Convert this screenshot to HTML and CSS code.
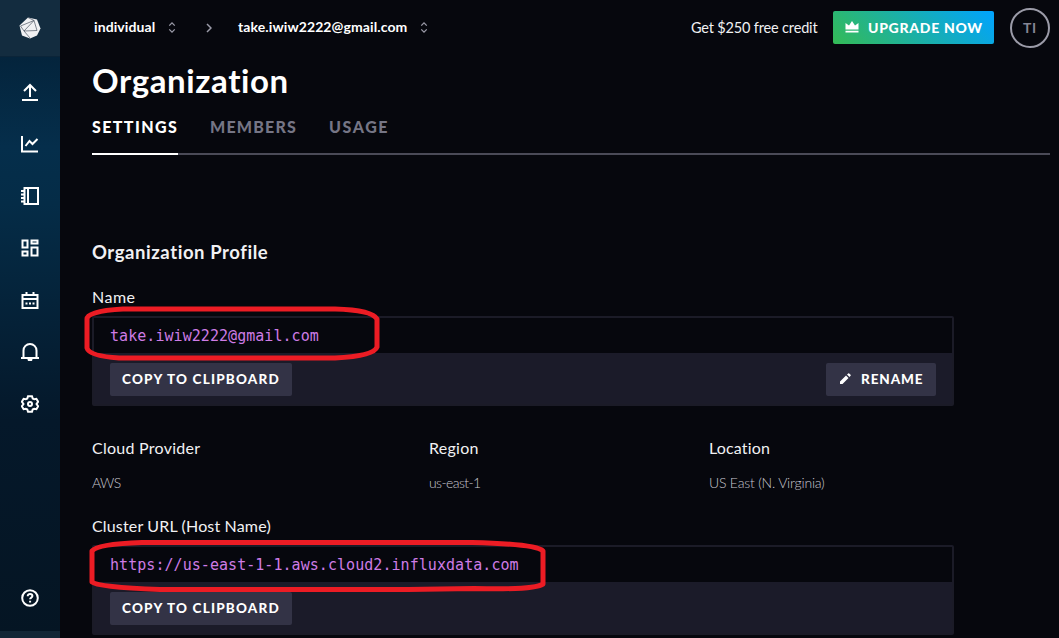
FILE: index.html
```
<!DOCTYPE html>
<html lang="en">
<head>
<meta charset="utf-8">
<title>Organization</title>
<link rel="stylesheet" href="styles.css">
</head>
<body>
<nav class="sidebar">
  <div class="logo">
    <svg width="22" height="22" viewBox="0 0 22 22"><path d="M9 .5 18 2.500l3.500 9-3.500 7-7 3-8-3L.5 8.500z" fill="#f1f1f3"/><path d="M1.500 9 15 3.500 18 13.500 5 14zM9 .5l6 3M5 14l6 7M5 14l10-10.500" fill="none" stroke="#4c5561" stroke-width=".7"/></svg>
  </div>
  <div class="nav-items">
    <svg class="icon" viewBox="0 0 18 18"><path d="M1 17h16M9 14V2M3 8l6-6 6 6"/></svg>
    <svg class="icon" viewBox="0 0 18 18"><path d="M1 1v15.500h16M4.500 11l4-5 3 3 5-5"/></svg>
    <svg class="icon" viewBox="0 0 18 18"><path d="M3.500 1H17v16H3.500zM7 1v16M0 4h3M0 7.500h3M0 11h3M0 14.500h3"/></svg>
    <svg class="icon" viewBox="0 0 18 18"><path d="M1.500 1.500h5v7h-5zM10.500 1.500h6v3h-6zM10.500 8.500h6v8h-6zM1.500 12.500h5v4h-5z"/></svg>
    <svg class="icon calendar" viewBox="0 0 18 18"><path d="M1.500 3h15v13h-15zM1.500 7h15M5.500 0v4M12.500 0v4"/><path class="thin" d="M4.500 11.500h2M8 11.500h2M11.500 11.500h2"/></svg>
    <svg class="icon" viewBox="0 0 18 18"><path d="M2.500 15V7.500a6.500 6.500 0 0 1 13 0V15M0 15h18"/><path class="solid" d="M6.500 16h5a2.500 2.500 0 0 1-5 0z"/></svg>
    <svg class="icon" viewBox="0 0 18 18"><path d="M7 1.300h4l.7 2.200 1.500.8 2.200-.5 1.700 2.900L15.500 9l1.600 2.300-1.700 2.900-2.200-.5-1.500.8-.7 2.200H7l-.7-2.200-1.500-.8-2.200.5-1.700-2.900L2.500 9 .9 6.700l1.700-2.900 2.200.5 1.500-.8z"/><circle cx="9" cy="9" r="2"/></svg>
  </div>
  <svg class="icon help" viewBox="0 0 18 18"><circle cx="9" cy="9" r="7.800"/><path d="M6.700 7.200c0-3 4.700-2.700 4.700-.1 0 1.700-2.300 1.400-2.300 3.200M9.100 11.800v1.700"/></svg>
  <div class="sidebar-foot"></div>
</nav>
<main class="main">
  <header class="header">
    <span class="crumb crumb-account">individual</span>
    <svg class="sort" viewBox="0 0 8 12"><path d="M1 4l3-3 3 3M1 8l3 3 3-3"/></svg>
    <svg class="chevron" viewBox="0 0 6 10"><path d="M1 1l4 4-4 4"/></svg>
    <span class="crumb crumb-org">take.iwiw2222@gmail.com</span>
    <svg class="sort" viewBox="0 0 8 12"><path d="M1 4l3-3 3 3M1 8l3 3 3-3"/></svg>
    <span class="credit">Get $250 free credit</span>
    <button class="upgrade"><svg width="14" height="12" viewBox="0 0 14 12"><path d="M.5 2 4 4.500 7 0l3 4.500L13.500 2v6.500H.5zM.5 9.700h13v1.800H.5z" fill="#fff"/></svg><span>UPGRADE NOW</span></button>
    <div class="avatar">TI</div>
  </header>
  <h1 class="title">Organization</h1>
  <div class="tabs"><span class="tab active">SETTINGS</span><span class="tab members">MEMBERS</span><span class="tab usage">USAGE</span></div>
  <section class="content">
    <h2 class="subtitle">Organization Profile</h2>
    <div class="label name">Name</div>
    <div class="snippet">
      <div class="code">take.iwiw2222@gmail.com</div>
      <div class="snippet-foot"><button class="btn copy">COPY TO CLIPBOARD</button><button class="btn rename"><svg width="12" height="12" viewBox="0 0 12 12"><path d="M1 8.500 7 2.500 9.500 5l-6 6H1zM8 1.500 9.200.4a.8.8 0 0 1 1 0l1.400 1.400a.8.8 0 0 1 0 1L10.500 4z" fill="#fff"/></svg><span>RENAME</span></button></div>
      <svg class="mark mark-name" width="298" height="58" viewBox="0 0 298 58"><path d="M4 14Q4 6 40 4H252Q289 5 294 14V42Q291 51 252 53H36Q6 51 4 43Z"/></svg>
    </div>
    <div class="facts">
      <div><div class="label provider">Cloud Provider</div><div class="value aws">AWS</div></div>
      <div><div class="label region">Region</div><div class="value zone">us-east-1</div></div>
      <div><div class="label location">Location</div><div class="value place">US East (N. Virginia)</div></div>
    </div>
    <div class="label cluster">Cluster URL (Host Name)</div>
    <div class="snippet">
      <div class="code">https://us-east-1-1.aws.cloud2.influxdata.com</div>
      <div class="snippet-foot"><button class="btn copy">COPY TO CLIPBOARD</button></div>
      <svg class="mark mark-url" width="460" height="56" viewBox="0 0 460 56"><path d="M4 12Q9 5 54 3.500H384Q448 5 455 12V45Q448 51 386 49.500L320 50.500H72Q9 48 4 43Z"/></svg>
    </div>
  </section>
</main>
</body>
</html>
```
FILE: styles.css
```
* { box-sizing: border-box; }
body { margin: 0; width: 1059px; height: 638px; overflow: hidden; display: flex; background: #06070d; color: #f1f1f3; font-family: Lato, "Open Sans", sans-serif; font-variant-ligatures: none; }
h1, h2 { margin: 0; }
button { border: 0; font-family: inherit; color: #fff; padding: 0; }
svg { display: block; flex: none; }
.sidebar { width: 60px; height: 638px; flex: none; display: flex; flex-direction: column; align-items: center; background: linear-gradient(#04243c 9%, #052e4b 23%, #052c47 32%, #05182a 66%, #051523); }
.logo { width: 60px; height: 57px; display: flex; align-items: center; justify-content: center; background: #132c3f; border-bottom: 1px solid #0b2438; }
.nav-items { margin-top: 26px; display: flex; flex-direction: column; gap: 34px; }
.icon { width: 18px; height: 18px; fill: none; stroke: #fff; stroke-width: 2; }
.icon .thin { stroke-width: 1.8; }
.icon .solid { fill: #fff; stroke: none; }
.calendar { margin: 1px 0 -1px; }
.help { margin-top: auto; margin-bottom: 24px; }
.sidebar-foot { width: 60px; height: 7px; background: #132636; }
.main { width: 999px; padding: 0 9px 0 32px; }
.header { height: 55px; display: flex; align-items: center; white-space: nowrap; }
.crumb { font-size: 14px; font-weight: 700; color: #fff; line-height: 20px; padding-bottom: 1px; }
.crumb-account { width: 63px; margin-left: 2px; letter-spacing: .1px; }
.crumb-org { width: 170px; margin-left: 26px; letter-spacing: .1px; }
.sort { width: 8px; height: 11px; margin-left: 11px; fill: none; stroke: #9b9ba8; stroke-width: 1.4; }
.crumb-org + .sort { margin-left: 12px; }
.chevron { width: 6px; height: 10px; margin-left: 30px; fill: none; stroke: #9b9ba8; stroke-width: 1.5; }
.credit { margin-left: auto; margin-right: 15px; width: 127px; font-size: 14.500px; letter-spacing: -.17px; line-height: 20px; padding-top: 1px; }
.upgrade { width: 161px; height: 33px; border-radius: 2px; display: flex; align-items: center; padding: 0 0 1px 12px; gap: 9px; background: linear-gradient(45deg, #34bb55, #00a3ff); font-size: 14px; font-weight: 900; letter-spacing: .7px; white-space: nowrap; }
.avatar { width: 40px; height: 40px; margin-left: 16px; border: 2px solid #9b9ba8; border-radius: 50%; display: flex; align-items: center; justify-content: center; color: #858594; font-size: 14px; font-weight: 700; letter-spacing: .8px; }
.title { height: 50px; line-height: 50px; font-size: 33px; color: #fff; letter-spacing: .6px; }
.tabs { height: 50px; border-bottom: 2px solid #4a4a57; display: flex; gap: 32px; }
.tab { height: 50px; line-height: 43px; font-size: 16px; font-weight: 900; letter-spacing: 1.4px; color: #757585; }
.active { width: 86px; color: #fff; border-bottom: 2px solid #fff; }
.members { width: 87px; letter-spacing: 1.2px; }
.usage { letter-spacing: 1.6px; }
.content { width: 862px; padding-top: 82px; }
.subtitle { height: 30px; line-height: 30px; font-size: 18.500px; letter-spacing: .57px; }
.label { height: 24px; line-height: 24px; font-size: 16px; letter-spacing: .16px; white-space: nowrap; }
.name { margin: 18px 0 7px; letter-spacing: .5px; }
.region, .provider { letter-spacing: .26px; }
.snippet { position: relative; height: 90px; border: 2px solid #1b1b27; border-radius: 2px; display: flex; flex-direction: column; }
.code { height: 35px; padding-left: 16px; line-height: 37px; font-family: "DejaVu Sans Mono", monospace; font-size: 15px; letter-spacing: .05px; color: #ce7ce5; }
.snippet-foot { height: 51px; padding: 10px 16px 0; display: flex; justify-content: space-between; background: #1b1b29; }
.btn { height: 33px; border-radius: 2px; background: #333346; font-size: 13.500px; font-weight: 900; letter-spacing: .9px; white-space: nowrap; padding-bottom: 2px; }
.copy { width: 182px; letter-spacing: 1.2px; }
.rename { width: 110px; display: flex; align-items: center; padding-left: 13px; gap: 10px; }
.facts { display: grid; grid-template-columns: 337px 280px 245px; margin-top: 30px; }
.value { height: 22px; margin-top: 12px; line-height: 22px; font-size: 14px; font-weight: 300; letter-spacing: -.2px; color: #c6c6cf; white-space: nowrap; }
.aws, .zone { letter-spacing: -.6px; }
.cluster { margin: 20px 0 7px; }
.mark { position: absolute; fill: none; stroke: #ec1c24; stroke-width: 5; stroke-linejoin: round; }
.mark-name { left: -11px; top: -13px; }
.mark-url { left: -6px; top: -8px; }
```
